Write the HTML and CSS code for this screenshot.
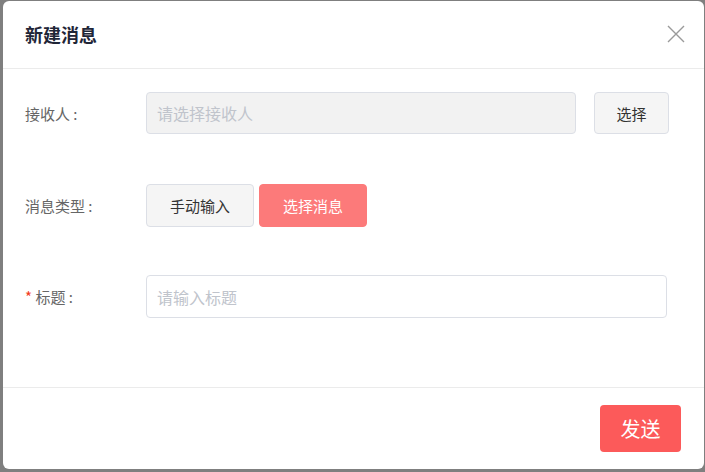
FILE: index.html
```html
<!DOCTYPE html>
<html lang="zh-CN">
<head>
    <meta charset="UTF-8">
    <title>新建消息</title>
    <link rel="stylesheet" href="styles.css">
</head>
<body>
    <div class="dialog">
        <div class="dialog-header">
            <span class="dialog-title">新建消息</span>
            <span class="dialog-close">
                <svg width="18" height="18" viewBox="0 0 18 18"><path d="M1 1L17 17M17 1L1 17" stroke="#9a9a9a" stroke-width="1.4" fill="none"/></svg>
            </span>
        </div>

        <div class="dialog-body">
            <div class="form-row">
                <label class="form-label">接收人 :</label>
                <div class="form-control">
                    <input class="input input-disabled" placeholder="请选择接收人" disabled>
                    <button class="btn btn-plain btn-pick">选择</button>
                </div>
            </div>

            <div class="form-row">
                <label class="form-label">消息类型 :</label>
                <div class="form-control">
                    <button class="btn btn-plain btn-type">手动输入</button>
                    <button class="btn btn-light-red btn-type">选择消息</button>
                </div>
            </div>

            <div class="form-row">
                <label class="form-label"><span class="required">*</span> 标题 :</label>
                <div class="form-control">
                    <input class="input input-title" placeholder="请输入标题">
                </div>
            </div>
        </div>

        <div class="dialog-footer">
            <button class="btn btn-red btn-send">发送</button>
        </div>
    </div>
</body>
</html>
```

FILE: styles.css
```css
* {
    margin: 0;
    padding: 0;
    box-sizing: border-box;
}

body {
    font-family: "Noto Sans CJK SC", "Noto Sans", sans-serif;
    background: #7f7f7f;
    height: 472px;
    overflow: hidden;
    padding: 1px 1px 3px 3px;
}

.dialog {
    background: #fff;
    border-radius: 6px;
    height: 468px;
    display: flex;
    flex-direction: column;
}

.dialog-header {
    height: 68px;
    border-bottom: 1px solid #ebebeb;
    display: flex;
    align-items: center;
    justify-content: space-between;
    padding: 0 19px 0 22px;
}

.dialog-title {
    font-size: 18px;
    font-weight: bold;
    color: #1f2638;
    margin-top: -2px;
}

.dialog-close {
    display: flex;
    margin-top: -2px;
}

.dialog-body {
    flex: 1;
    padding: 23px 0 0 22px;
}

.form-row {
    display: flex;
    align-items: center;
    margin-bottom: 48px;
}

.form-row:first-child {
    margin-bottom: 50px;
}

.form-label {
    width: 121px;
    font-size: 15px;
    color: #666;
    white-space: pre;
}

.required {
    color: #f23c1c;
}

.form-control {
    display: flex;
    align-items: center;
}

.input {
    height: 43px;
    border: 1px solid #dcdfe6;
    border-radius: 4px;
    padding: 0 10px;
    font-family: inherit;
    font-size: 16px;
    outline: none;
}

.input::placeholder {
    color: #c0c4cc;
}

.input-disabled {
    width: 430px;
    height: 42px;
    background: #f2f2f2;
}

.input-title {
    width: 521px;
    background: #fff;
}

.btn {
    font-family: inherit;
    font-size: 15px;
    border-radius: 4px;
    cursor: pointer;
}

.btn-plain {
    background: #f5f5f5;
    border: 1px solid #dcdfe6;
    color: #333;
}

.btn-pick {
    width: 75px;
    height: 42px;
    margin-left: 18px;
}

.btn-type {
    width: 108px;
    height: 43px;
}

.btn-type + .btn-type {
    margin-left: 5px;
}

.btn-light-red {
    background: #fc7a7a;
    border: 1px solid #fc7a7a;
    color: #fff;
}

.dialog-footer {
    border-top: 1px solid #ebebeb;
    height: 82px;
    display: flex;
    justify-content: flex-end;
    align-items: flex-start;
    padding: 17px 23px 0 0;
}

.btn-red {
    background: #fc5a5a;
    border: none;
    color: #fff;
}

.btn-send {
    width: 81px;
    height: 47px;
    font-size: 20px;
}
```
